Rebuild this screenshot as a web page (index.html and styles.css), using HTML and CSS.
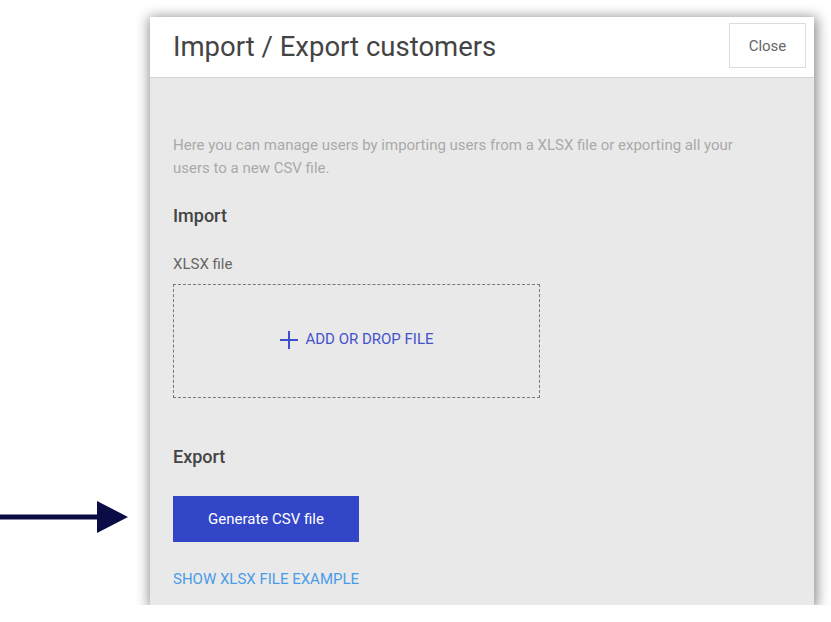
FILE: index.html
```html
<!DOCTYPE html>
<html lang="en">
<head>
  <meta charset="UTF-8">
  <meta name="viewport" content="width=device-width, initial-scale=1.0">
  <title>Import / Export customers</title>
  <link rel="stylesheet" href="styles.css">
</head>
<body>
  <svg class="arrow" width="128" height="34" viewBox="0 0 128 34">
    <line x1="0" y1="17" x2="100" y2="17" stroke="#0b0b45" stroke-width="5"/>
    <polygon points="97,1 128,17 97,33" fill="#0b0b45"/>
  </svg>

  <div class="modal">
    <div class="modal-head">
      <h1>Import / Export customers</h1>
      <button class="close">Close</button>
    </div>

    <div class="modal-body">
      <p class="desc">Here you can manage users by importing users from a XLSX file or exporting all your users to a new CSV file.</p>

      <h2>Import</h2>
      <div class="label">XLSX file</div>
      <div class="drop">
        <svg width="20" height="20" viewBox="0 0 20 20">
          <path d="M10 1v18M1 10h18" stroke="#3d4fcf" stroke-width="2"/>
        </svg>
        <span>ADD OR DROP FILE</span>
      </div>

      <h2 class="export">Export</h2>
      <button class="gen">Generate CSV file</button>
      <a href="#" class="example">SHOW XLSX FILE EXAMPLE</a>
    </div>
  </div>
</body>
</html>
```

FILE: styles.css
```css
* {
  margin: 0;
  padding: 0;
  box-sizing: border-box;
  font-family: Roboto, 'Liberation Sans', sans-serif;
}
body {
  background: #fff;
}
.arrow {
  position: absolute;
  left: 0;
  top: 500px;
}
.modal {
  width: 664px;
  height: 588px;
  margin: 17px 0 0 150px;
  background: #e9e9e9;
  box-shadow: 1px 2px 12px 2px rgba(0, 0, 0, 0.45);
}
.modal-head {
  height: 61px;
  background: #fff;
  border-bottom: 1px solid #d4d4d4;
  display: flex;
  align-items: flex-start;
  justify-content: space-between;
  padding: 0 8px 0 23px;
}
.modal-head h1 {
  font-size: 27.5px;
  font-weight: 400;
  color: #444;
  line-height: 59px;
}
.close {
  margin-top: 6px;
  width: 77px;
  height: 45px;
  background: #fff;
  border: 1px solid #dcdcdc;
  color: #666;
  font-size: 15px;
}
.modal-body {
  padding: 0 23px;
}
.desc {
  margin-top: 56px;
  width: 570px;
  font-size: 15px;
  line-height: 23px;
  color: #a9a9a9;
}
h2 {
  margin-top: 24px;
  font-size: 18px;
  font-weight: 500;
  line-height: 24px;
  color: #444;
}
.label {
  margin-top: 26px;
  font-size: 15px;
  line-height: 20px;
  color: #666;
}
.drop {
  margin-top: 10px;
  width: 367px;
  height: 114px;
  border: 1px dashed #777;
  display: flex;
  align-items: center;
  justify-content: center;
  gap: 6px;
  color: #4453cc;
  font-size: 15px;
  padding-bottom: 4px;
}
.drop svg {
  margin-top: 2px;
}
h2.export {
  margin-top: 47px;
}
.gen {
  display: block;
  margin-top: 27px;
  width: 186px;
  height: 46px;
  border: none;
  background: #3346c8;
  color: #fff;
  font-size: 15px;
}
.example {
  display: block;
  margin-top: 27px;
  font-size: 15px;
  line-height: 20px;
  color: #4a9ce8;
  text-decoration: none;
}
```
